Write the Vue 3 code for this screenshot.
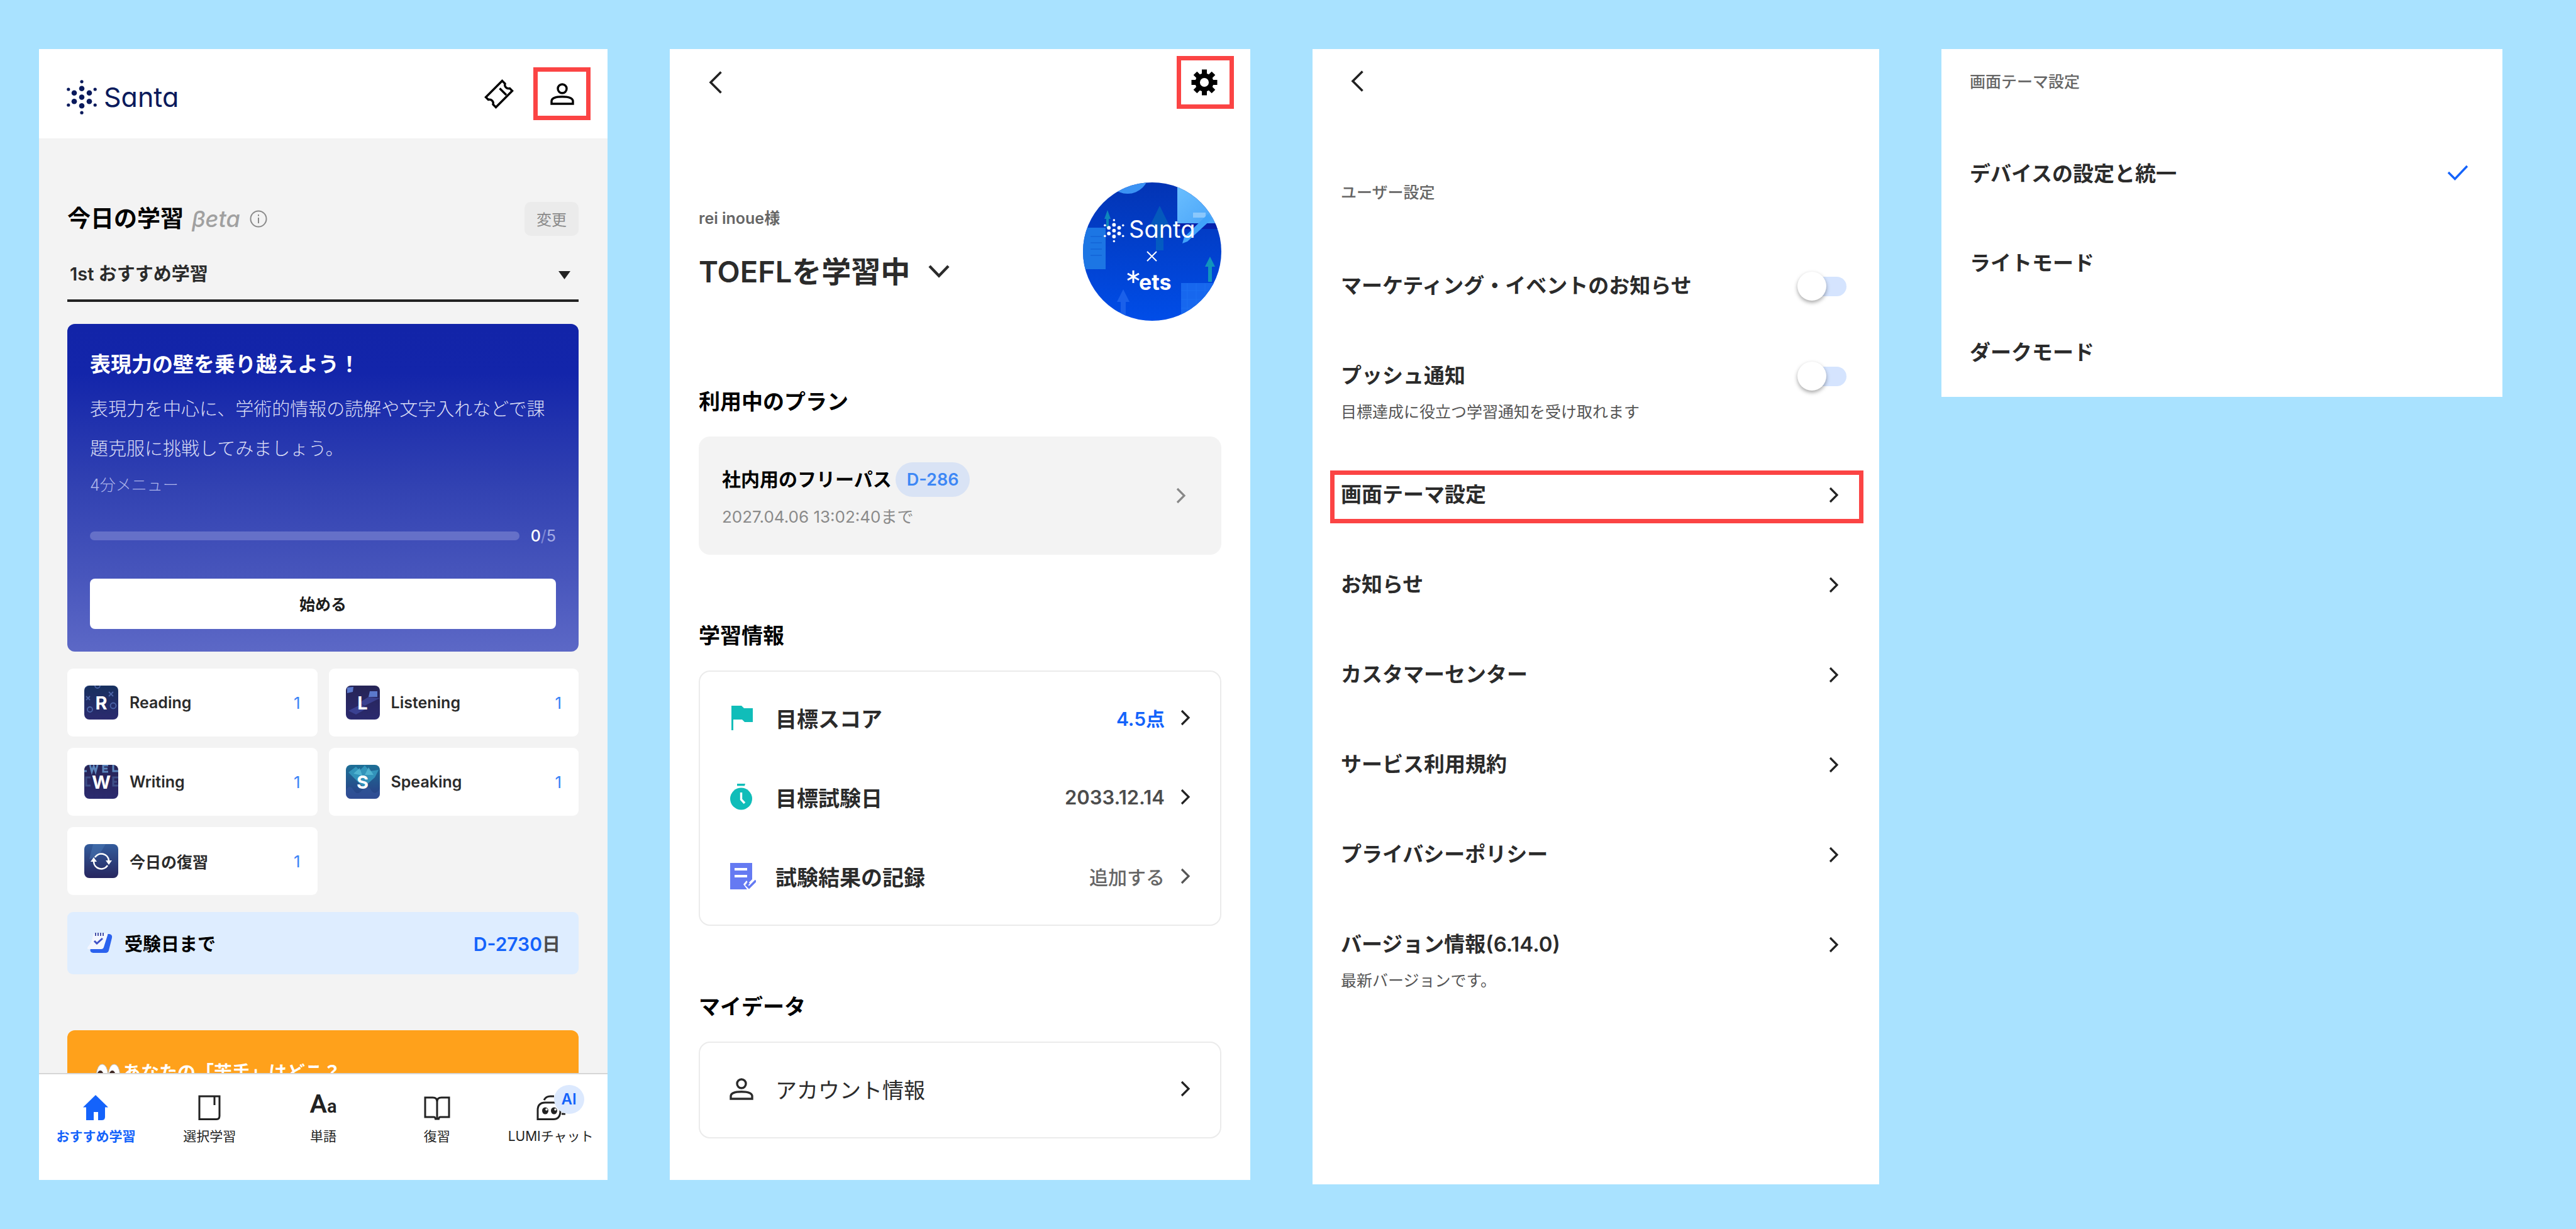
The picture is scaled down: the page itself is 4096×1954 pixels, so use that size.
<script setup>
import { ref } from 'vue'

const dots = [
  [24, 27.5, 4.3], [24, 13.8, 4.3], [24, 41.2, 4.3],
  [12, 20.8, 4.3], [36, 20.8, 4.3], [12, 34.2, 4.3], [36, 34.2, 4.3],
  [24, 2.8, 2.6], [24, 52.2, 2.6], [2.8, 15, 2.6], [45.2, 15, 2.6], [2.8, 40, 2.6], [45.2, 40, 2.6]
]
const gearTeeth = [0, 45, 90, 135, 180, 225, 270, 315]

const course = ref('1st')
const progress = ref({ done: 0, total: 5 })

const tasks = [
  { id: 'reading', letter: 'R', name: 'Reading', count: 1 },
  { id: 'listening', letter: 'L', name: 'Listening', count: 1 },
  { id: 'writing', letter: 'W', name: 'Writing', count: 1 },
  { id: 'speaking', letter: 'S', name: 'Speaking', count: 1 },
  { id: 'review', letter: '', name: '今日の復習', count: 1 }
]

const tabs = [
  { id: 'home', name: 'おすすめ学習', active: true },
  { id: 'select', name: '選択学習' },
  { id: 'words', name: '単語' },
  { id: 'review', name: '復習' },
  { id: 'chat', name: 'LUMIチャット' }
]

const infoRows = [
  { id: 'score', name: '目標スコア', value: '4.5点', tone: 'blue' },
  { id: 'date', name: '目標試験日', value: '2033.12.14', tone: 'dark' },
  { id: 'record', name: '試験結果の記録', value: '追加する', tone: 'muted' }
]

const switches = ref([
  { id: 'marketing', name: 'マーケティング・イベントのお知らせ', on: false },
  { id: 'push', name: 'プッシュ通知', note: '目標達成に役立つ学習通知を受け取れます', on: false }
])

const links = [
  { id: 'theme', name: '画面テーマ設定', marked: true },
  { id: 'news', name: 'お知らせ' },
  { id: 'support', name: 'カスタマーセンター' },
  { id: 'terms', name: 'サービス利用規約' },
  { id: 'privacy', name: 'プライバシーポリシー' },
  { id: 'version', name: 'バージョン情報(6.14.0)', note: '最新バージョンです。' }
]

const theme = ref('device')
const themes = [
  { id: 'device', name: 'デバイスの設定と統一' },
  { id: 'light', name: 'ライトモード' },
  { id: 'dark', name: 'ダークモード' }
]
</script>

<template>
  <main class="board">
    <!-- Home -->
    <section class="screen home">
      <header class="home-head">
        <div class="logo">
          <svg width="48" height="55" viewBox="0 0 48 55" fill="currentColor" aria-hidden="true">
            <circle v-for="(d, i) in dots" :key="i" :cx="d[0]" :cy="d[1]" :r="d[2]" />
          </svg>
          <span>Santa</span>
        </div>
        <button class="icon-btn" aria-label="チケット">
          <svg width="47" height="47" viewBox="0 0 47 47" fill="none" stroke="#000" stroke-width="3.4">
            <path d="M28.5 2.5l4.5 4.5a6 6 0 0 0 7.5 7.5l4 4L18.5 44.5l-4.5-4.5a6 6 0 0 0-7.5-7.5l-4-4Z" />
            <path d="M24.5 14.5L35 25" />
          </svg>
        </button>
        <button class="icon-btn framed" aria-label="マイページ">
          <svg width="38" height="35" viewBox="0 0 38 35" fill="none" stroke="#000" stroke-width="3.4">
            <circle cx="19" cy="9" r="7" />
            <path d="M2 33V29C2 23.500 10 21.700 19 21.700S36 23.500 36 29V33Z" />
          </svg>
        </button>
      </header>

      <div class="home-body">
        <div class="title-row">
          <h1>今日の学習</h1>
          <em>βeta</em>
          <svg width="28" height="28" viewBox="0 0 28 28" fill="none" stroke="#8a8a8a" stroke-width="2" aria-hidden="true">
            <circle cx="14" cy="14" r="12.500" />
            <path d="M14 12v9M14 7v2.600" />
          </svg>
          <button class="change">変更</button>
        </div>

        <div class="picker">
          <select v-model="course" aria-label="学習コース">
            <option value="1st">1st おすすめ学習</option>
          </select>
          <svg width="19" height="13" viewBox="0 0 19 13" fill="#222" aria-hidden="true"><path d="M0 0H19L9.500 13Z" /></svg>
        </div>

        <article class="lesson">
          <h2>表現力の壁を乗り越えよう！</h2>
          <p class="desc">表現力を中心に、学術的情報の読解や文字入れなどで課題克服に挑戦してみましょう。</p>
          <p class="meta">4分メニュー</p>
          <div class="progress">
            <div class="track" role="progressbar" :aria-valuenow="progress.done" aria-valuemin="0" :aria-valuemax="progress.total">
              <div class="fill" :style="{ width: (progress.done / progress.total) * 100 + '%' }"></div>
            </div>
            <span class="steps"><b>{{ progress.done }}</b><i>/</i>{{ progress.total }}</span>
          </div>
          <button class="start">始める</button>
        </article>

        <ul class="tasks">
          <li v-for="t in tasks" :key="t.id">
            <a href="#">
              <span class="thumb">
                <svg width="54" height="54" viewBox="0 0 54 54" aria-hidden="true">
                  <defs>
                    <linearGradient :id="'bg-' + t.id" x1="0" y1="0" x2="0" y2="1">
                      <stop offset="0" :stop-color="t.id === 'speaking' ? '#1d6f96' : t.id === 'review' ? '#335c9c' : t.id === 'reading' ? '#17305f' : '#262456'" />
                      <stop offset="1" :stop-color="t.id === 'speaking' ? '#2a3c85' : t.id === 'review' ? '#27265f' : '#2b2a6e'" />
                    </linearGradient>
                  </defs>
                  <rect width="54" height="54" :fill="`url(#bg-${t.id})`" />
                  <g v-if="t.id === 'reading'" fill="none" stroke="#4a63a6" stroke-width="1.800">
                    <circle cx="21" cy="0" r="4" /><circle cx="46" cy="32" r="4.500" /><circle cx="9" cy="38" r="4" />
                    <path d="M3 17l6 6M9 17l-6 6M39 10l7 7M46 10l-7 7M0 4l5-4" />
                  </g>
                  <g v-if="t.id === 'listening'" fill="#4652ad">
                    <path d="M2 3l10-1-1 8-9 2ZM38 9h12v9H36Z" fill="#5b79cc" />
                    <path d="M54 20L30 32 20 28 36 18ZM4 40l20-10 10 6-18 10Z" opacity=".6" />
                  </g>
                  <g v-if="t.id === 'writing'" stroke="#5c86bd" stroke-width="3" fill="none">
                    <path d="M9 0l3 11 3-9 3 9 3-11M38 1h-8v10h8M30 6h7M46 0v10h8M0 1h4M0 10h4" />
                    <path d="M10 20H3v13h7M54 20h-8v13h8M46 27h6" opacity=".4" />
                  </g>
                  <g v-if="t.id === 'speaking'">
                    <path d="M4 12L16 3l6 6 8-8 8 9 14-2-6 12-18 16L8 16Z" fill="#37a0c4" opacity=".8" />
                    <path d="M12 14L22 5l4 12ZM30 16l6-12 8 12Z" fill="#5cc2dc" opacity=".7" />
                    <path d="M0 40q6-10 12 0t14 0 14 0 14-2V54H0Z" fill="#34569c" opacity=".6" />
                  </g>
                  <g v-if="t.id === 'review'">
                    <path d="M14 0h20L22 20 8 24Z" fill="#4a78b4" opacity=".5" />
                    <g fill="none" stroke="#fff" stroke-width="2.600">
                      <path d="M17 21A12 12 0 0 1 39 26M37 34A12 12 0 0 1 15 28" />
                    </g>
                    <path d="M34 26h10l-5 7ZM10 28h10l-5-7Z" fill="#fff" />
                  </g>
                </svg>
                <b v-if="t.letter">{{ t.letter }}</b>
              </span>
              <span class="name">{{ t.name }}</span>
              <span class="count">{{ t.count }}</span>
            </a>
          </li>
        </ul>

        <a class="dday" href="#">
          <svg width="41" height="32" viewBox="0 0 41 32" aria-hidden="true">
            <path d="M14 2H36Q41 3 40 8L35 28Q34 32 30 32H10Q4 31 6 25Z" fill="#2b62ee" />
            <path d="M12 1H32Q34 1 33 4L27 23Q26 26 23 26H2Q0 25 2 22Q8 16 10 4Q11 1 12 1Z" fill="#f3f6ff" />
            <path d="M14 0v5M18 0v5M22 0v5M26 0v5" stroke="#4450a8" stroke-width="2" />
            <path d="M12 13l4 4 9-8" fill="none" stroke="#3f51c7" stroke-width="3" />
          </svg>
          <span>受験日まで</span>
          <strong><b>D-2730</b>日</strong>
        </a>

        <aside class="banner">
          <svg width="38" height="34" viewBox="0 0 38 34" aria-hidden="true">
            <ellipse cx="9.500" cy="17" rx="9" ry="16" fill="#fff" stroke="#b9b9b9" />
            <ellipse cx="28.500" cy="17" rx="9" ry="16" fill="#fff" stroke="#b9b9b9" />
            <ellipse cx="6.500" cy="19" rx="5" ry="8" fill="#3b2420" />
            <ellipse cx="25.500" cy="19" rx="5" ry="8" fill="#3b2420" />
          </svg>
          <span>あなたの「苦手」はどこ？</span>
        </aside>
      </div>

      <nav class="tabs">
        <a v-for="tab in tabs" :key="tab.id" href="#" :class="{ active: tab.active }">
          <span class="tab-icon">
            <svg v-if="tab.id === 'home'" width="40" height="40" viewBox="0 0 40 40" fill="currentColor" aria-hidden="true">
              <path d="M20 0L40 19.500H35V35Q35 40 30 40H24V27H17V40H5V19.500H0Z" />
            </svg>
            <svg v-else-if="tab.id === 'select'" width="36" height="40" viewBox="0 0 36 40" fill="none" stroke="currentColor" stroke-width="3" aria-hidden="true">
              <path d="M2 2H34V33.500Q34 38.500 29 38.500H2Z" /><path d="M26 2V16" />
            </svg>
            <span v-else-if="tab.id === 'words'" class="aa">A<small>a</small></span>
            <svg v-else-if="tab.id === 'review'" width="42" height="38" viewBox="0 0 42 38" fill="none" stroke="currentColor" stroke-width="3" aria-hidden="true">
              <path d="M2 2H14Q21 2 21 8Q21 2 28 2H40V33H26Q24 33 23.500 36H18.500Q18 33 16 33H2Z" /><path d="M21 6V36" />
            </svg>
            <template v-else>
              <svg width="46" height="40" viewBox="0 0 46 40" fill="none" stroke="currentColor" stroke-width="3" aria-hidden="true">
                <path d="M2 38.500V24Q2 12 14 12H28Q38 12 38 25Q38 38.500 27 38.500Z" />
                <path d="M12 8Q15 2 22 2H28M40 30h7" />
                <ellipse cx="14" cy="25" rx="5" ry="5.500" fill="currentColor" stroke="none" />
                <ellipse cx="28" cy="25" rx="5" ry="5.500" fill="currentColor" stroke="none" />
                <circle cx="16" cy="23" r="1.800" fill="#fff" stroke="none" /><circle cx="30" cy="23" r="1.800" fill="#fff" stroke="none" />
              </svg>
              <b class="ai">AI</b>
            </template>
          </span>
          <span class="tab-name">{{ tab.name }}</span>
        </a>
      </nav>
    </section>

    <!-- My page -->
    <section class="screen mypage">
      <header class="page-head">
        <button class="icon-btn" aria-label="戻る">
          <svg width="22" height="36" viewBox="0 0 22 36" fill="none" stroke="#222" stroke-width="3.600"><path d="M19.500 1.500L3 18L19.500 34.500" /></svg>
        </button>
        <button class="icon-btn framed" aria-label="設定">
          <svg width="42" height="42" viewBox="-21 -21 42 42" aria-hidden="true">
            <circle r="10.800" fill="none" stroke="#000" stroke-width="7.500" />
            <rect v-for="a in gearTeeth" :key="a" x="-4" y="-20.500" width="8" height="9" :transform="`rotate(${a})`" />
          </svg>
        </button>
      </header>

      <div class="page-body">
        <div class="profile">
          <div class="who">
            <p>rei inoue様</p>
            <button>
              <span>TOEFLを学習中</span>
              <svg width="34" height="22" viewBox="0 0 34 22" fill="none" stroke="#2b2b2b" stroke-width="4.400" aria-hidden="true"><path d="M2 2L17 17.500L32 2" /></svg>
            </button>
          </div>
          <svg class="avatar" width="220" height="220" viewBox="0 0 220 220" role="img" aria-label="Santa × ets">
            <defs>
              <linearGradient id="av-bg" x1="0" y1="0" x2="0" y2="1"><stop offset="0" stop-color="#0334b4" /><stop offset="1" stop-color="#004de8" /></linearGradient>
              <linearGradient id="av-sky" x1="0" y1="0" x2="1" y2="1"><stop offset="0" stop-color="#6cc0ff" /><stop offset="1" stop-color="#47a2f8" /></linearGradient>
              <clipPath id="av-clip"><circle cx="110" cy="110" r="110" /></clipPath>
            </defs>
            <g clip-path="url(#av-clip)">
              <rect width="220" height="220" fill="url(#av-bg)" />
              <circle cx="71" cy="-16" r="34" fill="#3b93f4" />
              <rect x="150" y="65" width="70" height="9" fill="#0722ac" />
              <rect x="150" y="0" width="70" height="65" fill="url(#av-sky)" />
              <rect x="175" y="48" width="20" height="8" fill="#8bc8fc" />
              <rect x="0" y="72" width="36" height="66" fill="#1c76e4" />
              <path d="M12 86h18M12 96h18M12 106h18M12 116h18" stroke="#1468da" stroke-width="2" />
              <rect x="156" y="160" width="64" height="60" fill="#1767ee" />
              <path d="M166 160v60M180 160v60M194 160v60M156 172h64M156 186h64M156 200h64" stroke="#1d70f2" />
              <path d="M122 37L137 68H128V108H116V68H107Z" fill="#0578b8" opacity=".5" />
              <path d="M39 44L44 58H41V72H37V58H34Z" fill="#0e86bd" />
              <path d="M202 118L210 134H205V158H199V134H194Z" fill="#1094bd" />
              <path d="M64 170L74 190H68V212H60V190H54Z" fill="#1a60ea" />
              <path d="M199 50L205 58L166 94L158 97L161 87Z" fill="#41a3fa" />
              <g fill="#fff" transform="translate(33 58) scale(.68)">
                <circle v-for="(d, i) in dots" :key="i" :cx="d[0]" :cy="d[1]" :r="d[2]" />
              </g>
              <text class="av-santa" x="73" y="88">Santa</text>
              <path d="M102 110L117 125M117 110L102 125" stroke="#fff" stroke-width="2" />
              <path d="M80 140V160M71 145L89 155M89 145L71 155" stroke="#fff" stroke-width="3" />
              <text class="av-ets" x="89" y="171">ets</text>
            </g>
          </svg>
        </div>

        <h2>利用中のプラン</h2>
        <a class="plan" href="#">
          <span class="plan-text">
            <span class="plan-name">社内用のフリーパス<b>D-286</b></span>
            <span class="plan-date">2027.04.06 13:02:40まで</span>
          </span>
          <svg width="16" height="26" viewBox="0 0 16 26" fill="none" stroke="#888" stroke-width="3.200" aria-hidden="true"><path d="M2 2L13 13L2 24" /></svg>
        </a>

        <h2>学習情報</h2>
        <ul class="box info">
          <li v-for="r in infoRows" :key="r.id">
            <a href="#">
              <span class="row-icon">
                <svg v-if="r.id === 'score'" width="42" height="42" viewBox="0 0 42 42" fill="#10bdb9"><path d="M3 2H19L23 6H37V28H24L20 24H6V41H3Z" /></svg>
                <svg v-else-if="r.id === 'date'" width="42" height="42" viewBox="0 0 42 42"><path d="M12 0H25L24 3.500H12Z" fill="#10bdb9" /><circle cx="18.500" cy="24" r="17.500" fill="#10bdb9" /><path d="M18.500 14V25L24 31" fill="none" stroke="#fff" stroke-width="3.400" /></svg>
                <svg v-else width="42" height="42" viewBox="0 0 42 42"><path d="M1 0H36V26L30 32 27 28 22 34 28 42H1Z" fill="#657af2" /><path d="M8 10H28M8 21H28" stroke="#fff" stroke-width="4" /><path d="M26 34L31 39L42 28M28 31l3 3" fill="none" stroke="#657af2" stroke-width="3.600" /></svg>
              </span>
              <span class="name">{{ r.name }}</span>
              <span class="value" :class="r.tone">{{ r.value }}</span>
              <svg width="16" height="26" viewBox="0 0 16 26" fill="none" :stroke="r.tone === 'muted' ? '#555' : '#222'" stroke-width="3.200" aria-hidden="true"><path d="M2 2L13 13L2 24" /></svg>
            </a>
          </li>
        </ul>

        <h2>マイデータ</h2>
        <a class="box account" href="#">
          <span class="row-icon">
            <svg width="38" height="35" viewBox="0 0 38 35" fill="none" stroke="#2b2b2b" stroke-width="3.400">
              <circle cx="19" cy="9" r="7" />
              <path d="M2 33V29C2 23.500 10 21.700 19 21.700S36 23.500 36 29V33Z" />
            </svg>
          </span>
          <span class="name">アカウント情報</span>
          <svg width="16" height="26" viewBox="0 0 16 26" fill="none" stroke="#222" stroke-width="3.200" aria-hidden="true"><path d="M2 2L13 13L2 24" /></svg>
        </a>
      </div>
    </section>

    <!-- Settings -->
    <section class="screen settings">
      <button class="icon-btn back" aria-label="戻る">
        <svg width="22" height="34" viewBox="0 0 22 34" fill="none" stroke="#222" stroke-width="3.600"><path d="M18.500 1.500L3 17L18.500 32.500" /></svg>
      </button>
      <h3 class="group">ユーザー設定</h3>
      <label v-for="s in switches" :key="s.id" class="setting">
        <span class="line">
          <span class="name">{{ s.name }}</span>
          <input v-model="s.on" type="checkbox" role="switch" class="switch" />
        </span>
        <span v-if="s.note" class="note">{{ s.note }}</span>
      </label>
      <a v-for="l in links" :key="l.id" href="#" class="setting" :class="{ marked: l.marked }">
        <span class="line">
          <span class="name">{{ l.name }}</span>
          <svg class="go" width="16" height="26" viewBox="0 0 16 26" fill="none" stroke="#222" stroke-width="3.200" aria-hidden="true"><path d="M2 2L13 13L2 24" /></svg>
        </span>
        <span v-if="l.note" class="note">{{ l.note }}</span>
      </a>
    </section>

    <!-- Theme sheet -->
    <section class="screen theme">
      <h3 class="group">画面テーマ設定</h3>
      <label v-for="t in themes" :key="t.id" class="choice">
        <input v-model="theme" type="radio" name="theme" :value="t.id" />
        <span class="name">{{ t.name }}</span>
        <svg v-if="theme === t.id" width="34" height="25" viewBox="0 0 34 25" fill="none" stroke="#1463fb" stroke-width="3.400" aria-hidden="true"><path d="M2 12L12.500 22.500L32 2" /></svg>
      </label>
    </section>
  </main>
</template>

<style>
body {
  margin: 0;
  background: #a9e2ff;
}
</style>

<style scoped>
.board,
.board * {
  box-sizing: border-box;
}
.board {
  display: grid;
  grid-template-columns: 904fr 923fr 901fr 892fr;
  gap: 99px;
  align-items: start;
  min-height: 100vh;
  padding: 78px 117px 70px 62px;
  background: #a9e2ff;
  color: #2b2b2b;
  font-family: Inter, "Noto Sans CJK JP", sans-serif;
}
.screen {
  min-width: 0;
  background: #fff;
}
h1, h2, h3, p, ul {
  margin: 0;
  padding: 0;
}
ul {
  list-style: none;
}
a {
  color: inherit;
  text-decoration: none;
}
svg {
  display: block;
  flex: none;
}
button, select {
  font-family: inherit;
  color: inherit;
}
.icon-btn {
  display: flex;
  align-items: center;
  justify-content: center;
  padding: 0;
  border: 0;
  background: none;
}
.framed {
  width: 91px;
  height: 84px;
  border: 7px solid #fb4444;
}

/* Home */
.home-head {
  display: flex;
  align-items: center;
  gap: 31px;
  height: 142px;
  padding: 0 27px 0 44px;
}
.logo {
  display: flex;
  align-items: center;
  gap: 11px;
  margin-right: auto;
  padding-top: 10px;
  color: #0a1a5c;
  font-size: 43px;
  line-height: 55px;
  font-feature-settings: "cv11";
}
.home-body {
  padding: 101px 46px 0 45px;
  background: #f3f3f3;
}
.title-row {
  display: flex;
  align-items: center;
  height: 54px;
}
.title-row h1 {
  color: #000;
  font-size: 37px;
  font-weight: 600;
  line-height: 54px;
}
.title-row em {
  margin: 0 15px 0 13px;
  color: #a0a0a0;
  font-size: 36px;
  font-weight: 500;
  line-height: 54px;
  font-feature-settings: "cv11";
}
.change {
  width: 86px;
  height: 54px;
  margin-left: auto;
  padding: 0 0 2px;
  border: 0;
  border-radius: 10px;
  background: #ebebeb;
  color: #8a8a8a;
  font-size: 24px;
}
.picker {
  position: relative;
  margin-top: 20px;
}
.picker select {
  display: block;
  width: 100%;
  height: 85px;
  padding: 0 4px;
  border: 0;
  border-bottom: 4px solid #222;
  border-radius: 0;
  appearance: none;
  background: none;
  font-size: 29px;
  font-weight: 600;
}
.picker svg {
  position: absolute;
  top: 36px;
  right: 13px;
  pointer-events: none;
}
.lesson {
  margin-top: 35px;
  padding: 36px;
  border-radius: 12px;
  background: linear-gradient(#1224a8 0%, #1325aa 15%, #3242b2 50%, #4654bb 75%, #5c68c6 100%);
  color: #fff;
}
.lesson h2 {
  font-size: 33px;
  font-weight: 600;
  line-height: 56px;
}
.desc {
  margin-top: 12px;
  color: #dcdff5;
  font-size: 29px;
  font-weight: 300;
  line-height: 63px;
}
.meta {
  margin-top: 8px;
  color: #aeb5ea;
  font-size: 25px;
  font-weight: 300;
  line-height: 36px;
}
.progress {
  display: flex;
  align-items: center;
  gap: 18px;
  margin-top: 48px;
}
.track {
  flex: 1;
  height: 14px;
  border-radius: 7px;
  background: #6570c8;
  overflow: hidden;
}
.fill {
  height: 100%;
  background: #fff;
}
.steps {
  color: #a6aee6;
  font-size: 25px;
  line-height: 30px;
}
.steps b {
  color: #fff;
  font-weight: 500;
}
.steps i {
  color: #7f89d6;
  font-style: normal;
}
.start {
  display: block;
  width: 100%;
  height: 80px;
  margin-top: 53px;
  padding: 0 0 2px;
  border: 0;
  border-radius: 8px;
  background: #fff;
  color: #1c1c1c;
  font-size: 25px;
  font-weight: 600;
}
.tasks {
  display: grid;
  grid-template-columns: 1fr 1fr;
  gap: 18px;
  margin-top: 27px;
}
.tasks a {
  display: flex;
  align-items: center;
  gap: 18px;
  height: 108px;
  padding: 0 27px;
  border-radius: 9px;
  background: #fff;
}
.thumb {
  position: relative;
  width: 54px;
  height: 54px;
  border-radius: 8px;
  overflow: hidden;
}
.thumb b {
  position: absolute;
  inset: 0;
  color: #fff;
  font-size: 29px;
  font-weight: 700;
  line-height: 56px;
  text-align: center;
}
.tasks .name {
  flex: 1;
  font-size: 25px;
  font-weight: 600;
}
.count {
  color: #3a83f6;
  font-size: 26px;
}
.dday {
  display: flex;
  align-items: center;
  gap: 19px;
  height: 99px;
  margin-top: 27px;
  padding: 0 29px 2px 31px;
  border-radius: 9px;
  background: #deedff;
  color: #000;
  font-size: 29px;
  font-weight: 600;
}
.dday strong {
  margin-left: auto;
  color: #4c4c4c;
  font-weight: 600;
}
.dday b {
  color: #1463fb;
  font-size: 30px;
  font-weight: 600;
}
.banner {
  display: flex;
  align-items: flex-start;
  gap: 4px;
  height: 68px;
  margin-top: 89px;
  padding: 46px 46px 0;
  border-radius: 12px 12px 0 0;
  background: #ffa11b;
  color: #fff;
  font-size: 29px;
  font-weight: 600;
  line-height: 44px;
  overflow: hidden;
}
.banner svg {
  margin-top: 7px;
}
.tabs {
  display: grid;
  grid-template-columns: repeat(5, 1fr);
  padding: 33px 0 55px;
  border-top: 2px solid #d6d6d6;
}
.tabs a {
  display: flex;
  flex-direction: column;
  align-items: center;
  gap: 12px;
  color: #222;
  font-size: 21px;
  line-height: 28px;
  white-space: nowrap;
}
.tabs .active {
  color: #1463fb;
  font-weight: 600;
}
.tab-icon {
  position: relative;
  display: flex;
  align-items: flex-end;
  height: 40px;
}
.aa {
  font-family: Roboto, sans-serif;
  font-size: 41px;
  font-weight: 600;
  line-height: 44px;
}
.aa small {
  font-size: 29px;
}
.ai {
  position: absolute;
  top: -16px;
  left: 28px;
  width: 48px;
  height: 46px;
  border-radius: 50%;
  background: #dce9fe;
  color: #1463fb;
  font-size: 24px;
  font-weight: 600;
  line-height: 45px;
  text-align: center;
}

/* My page */
.page-head {
  display: flex;
  align-items: center;
  justify-content: space-between;
  padding: 11px 26px 0 62px;
}
.page-head .framed {
  padding-right: 4px;
}
.page-body {
  padding: 117px 46px 66px;
}
.profile {
  display: flex;
  justify-content: space-between;
}
.who {
  padding-top: 37px;
}
.who p {
  color: #666;
  font-size: 25px;
  font-weight: 600;
  line-height: 40px;
}
.who button {
  display: flex;
  align-items: center;
  gap: 29px;
  margin-top: 33px;
  padding: 0;
  border: 0;
  background: none;
  font-size: 47px;
  font-weight: 600;
  line-height: 64px;
}
.av-santa {
  fill: #fff;
  font-size: 38px;
  font-weight: 400;
  font-feature-settings: "cv11";
}
.av-ets {
  fill: #fff;
  font-size: 34px;
  font-weight: 700;
}
.page-body h2 {
  margin: 105px 0 31px;
  color: #000;
  font-size: 34px;
  font-weight: 600;
  line-height: 48px;
}
.plan {
  display: flex;
  align-items: center;
  justify-content: space-between;
  padding: 41px 56px 42px 37px;
  border-radius: 18px;
  background: #f3f3f3;
}
.plan-text {
  display: flex;
  flex-direction: column;
  gap: 14px;
}
.plan-name {
  display: flex;
  align-items: center;
  gap: 6px;
  color: #000;
  font-size: 30px;
  font-weight: 600;
  line-height: 55px;
}
.plan-name b {
  padding: 0 18px;
  border-radius: 28px;
  background: #d9e3f5;
  color: #3d87f5;
  font-size: 27px;
  font-weight: 600;
}
.plan-date {
  color: #8a8a8a;
  font-size: 26px;
  line-height: 36px;
}
.box {
  border: 2px solid #ebebeb;
  border-radius: 18px;
}
.info {
  padding: 10px 0 14px;
}
.info a,
.account {
  display: flex;
  align-items: center;
  height: 126px;
  padding: 0 47px;
  font-size: 34px;
}
.info a {
  font-weight: 600;
}
.account {
  height: 154px;
  padding-bottom: 4px;
}
.row-icon {
  display: flex;
  width: 73px;
}
.box .name {
  flex: 1;
}
.value {
  margin-right: 25px;
  font-size: 30px;
}
.value.blue {
  color: #1463fb;
}
.value.dark {
  color: #4c4c4c;
  font-size: 31px;
}
.value.muted {
  color: #666;
  font-weight: 500;
}

/* Settings */
.settings {
  padding: 34px 52px 264px 45px;
}
.back {
  margin-left: 16px;
}
.group {
  color: #666;
  font-size: 25px;
  font-weight: 500;
  line-height: 40px;
}
.settings .group {
  margin: 140px 0 57px;
}
.setting {
  position: relative;
  display: block;
  padding: 47px 0;
  font-size: 33px;
  font-weight: 600;
  line-height: 49px;
}
.line {
  display: flex;
  align-items: center;
  justify-content: space-between;
}
.go {
  margin-right: 12px;
}
.note {
  display: block;
  margin-top: 20px;
  color: #555;
  font-size: 25px;
  font-weight: 400;
  line-height: 26px;
}
.marked::after {
  content: "";
  position: absolute;
  inset: 33px -27px 26px -17px;
  border: 7px solid #fb4444;
}
.switch {
  position: relative;
  width: 78px;
  height: 46px;
  margin: 0;
  appearance: none;
}
.switch::before {
  content: "";
  position: absolute;
  inset: 8px 0 7px 6px;
  border-radius: 16px;
  background: #d5e4fe;
}
.switch::after {
  content: "";
  position: absolute;
  top: 0;
  left: 0;
  width: 46px;
  height: 46px;
  border-radius: 50%;
  background: #fff;
  box-shadow: 0 3px 6px rgba(0, 0, 0, 0.35);
}
.switch:checked::before {
  background: #1463fb;
}
.switch:checked::after {
  left: 32px;
}

/* Theme sheet */
.theme {
  padding: 32px 54px 2px 45px;
}
.theme .group {
  margin-bottom: 53px;
}
.choice {
  display: flex;
  align-items: center;
  justify-content: space-between;
  height: 142px;
  font-size: 33px;
  font-weight: 600;
}
.choice input {
  position: absolute;
  opacity: 0;
}
</style>
